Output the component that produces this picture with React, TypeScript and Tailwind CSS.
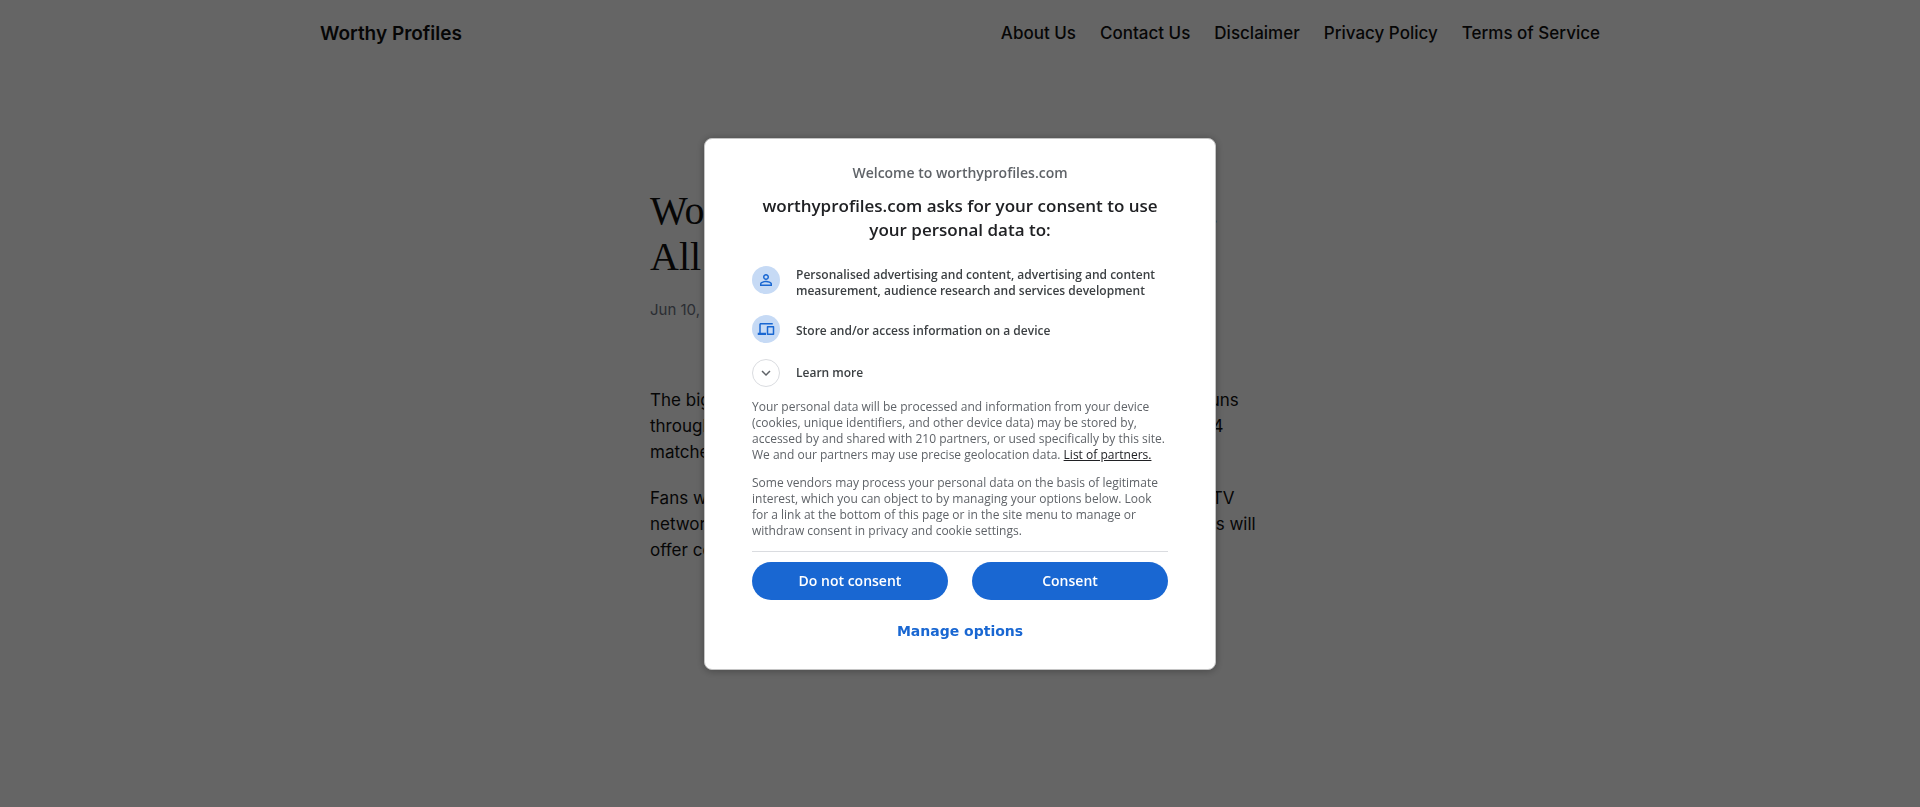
import type { ReactNode } from "react";
import { MdExpandMore, MdPersonOutline } from "react-icons/md";

const navLinks = ["About Us", "Contact Us", "Disclaimer", "Privacy Policy", "Terms of Service"];

function DevicesIcon() {
  return (
    <svg viewBox="0 0 24 24" className="size-[18px]" fill="currentColor" aria-hidden="true">
      <path d="M1 17h2V6c0-1.1.9-2 2-2h16v2H5v11h7v3H1v-3z" />
      <path d="M14 8h8c.55 0 1 .45 1 1v10c0 .55-.45 1-1 1h-8c-.55 0-1-.45-1-1V9c0-.55.45-1 1-1zm1 2v8h6v-8h-6z" fillRule="evenodd" />
    </svg>
  );
}

function Purpose({ icon, children }: { icon: ReactNode; children: ReactNode }) {
  return (
    <li className="flex gap-4 min-h-8">
      <span className="flex size-7 shrink-0 items-center justify-center rounded-full bg-[#c6daf5] text-[#1967d2]">{icon}</span>
      <span className="self-center pt-px">{children}</span>
    </li>
  );
}

function ConsentDialog() {
  return (
    <div className="fixed inset-0 z-50 flex items-center justify-center bg-black/60">
      <section
        role="dialog"
        aria-modal="true"
        aria-labelledby="consent-title"
        className="w-full max-w-[512px] rounded-lg border border-[#c4c4c4] bg-white px-[47px] pt-6 pb-[19px] font-['Open_Sans',sans-serif] shadow-[0_1px_8px_rgba(0,0,0,0.3)]"
      >
        <p className="text-center text-sm font-semibold text-[#5f6368]">Welcome to worthyprofiles.com</p>
        <h2 id="consent-title" className="mt-[11px] text-center text-[17px]/6 font-semibold text-[#202124]">
          worthyprofiles.com asks for your consent to use
          <br />
          your personal data to:
        </h2>

        <ul className="mt-6 flex flex-col gap-4 text-xs/4 font-semibold text-[#3c4043]">
          <Purpose icon={<MdPersonOutline className="size-[18px]" />}>
            Personalised advertising and content, advertising and content measurement, audience research and services development
          </Purpose>
          <Purpose icon={<DevicesIcon />}>Store and/or access information on a device</Purpose>
        </ul>
        <button type="button" className="mt-3 flex items-center gap-4 text-xs/4 font-semibold text-[#3c4043]">
          <span className="flex size-7 items-center justify-center rounded-full border border-[#dadce0] text-[#5f6368]">
            <MdExpandMore className="size-[18px]" />
          </span>
          Learn more
        </button>

        <div className="mt-3 flex flex-col gap-3 border-b border-[#dadce0] pb-3 text-xs/4 text-[#5f6368]">
          <p>
            Your personal data will be processed and information from your device (cookies, unique identifiers, and other
            device data) may be stored by, accessed by and shared with 210 partners, or used specifically by this site. We
            and our partners may use precise geolocation data.{" "}
            <a href="#partners" className="text-[#202124] underline">List of partners.</a>
          </p>
          <p>
            Some vendors may process your personal data on the basis of legitimate interest, which you can object to by
            managing your options below. Look for a link at the bottom of this page or in the site menu to manage or
            withdraw consent in privacy and cookie settings.
          </p>
        </div>

        <div className="mt-[10px] grid grid-cols-2 gap-6 text-sm font-semibold text-white">
          <button type="button" className="h-[38px] rounded-full bg-[#1967d2]">Do not consent</button>
          <button type="button" className="h-[38px] rounded-full bg-[#1967d2]">Consent</button>
        </div>
        <button type="button" className="mt-3 h-[38px] w-full font-['DejaVu_Sans',sans-serif] text-sm font-bold text-[#1967d2]">
          Manage options
        </button>
      </section>
    </div>
  );
}

export default function App() {
  return (
    <div className="min-h-screen bg-[#fcfcfc] font-[Inter,sans-serif] text-[#111111]">
      <header className="mx-auto flex h-[68px] max-w-[1280px] items-center justify-between">
        <a href="#home" className="text-[19px] font-semibold">Worthy Profiles</a>
        <nav aria-label="Main navigation">
          <ul className="flex gap-6 text-[17px] font-medium">
            {navLinks.map((label) => (
              <li key={label}>
                <a href="#page">{label}</a>
              </li>
            ))}
          </ul>
        </nav>
      </header>

      <main className="mx-auto max-w-[620px] pt-[120px]">
        <h1 className="font-['Liberation_Serif',serif] text-[40px]/[46px]">
          World Cup 2026 TV Channels List.
          <br />
          All Networks
        </h1>
        <p className="mt-5 text-[15px]/5 text-[#6b7280]">Jun 10, 2026</p>
        <div className="mt-[67px] flex flex-col gap-5 text-[17px]/[26px]">
          <p>
            The biggest World Cup in history is ready, and this competition soon runs
            <br />
            through the middle of July, with forty-eight teams playing for all the 104
            <br />
            matches.
          </p>
          <p>
            Fans watching at home may follow every single match on the national TV
            <br />
            networks in their own countries, while many streaming apps and videos will
            <br />
            offer coverage.
          </p>
        </div>
      </main>

      <ConsentDialog />
    </div>
  );
}
